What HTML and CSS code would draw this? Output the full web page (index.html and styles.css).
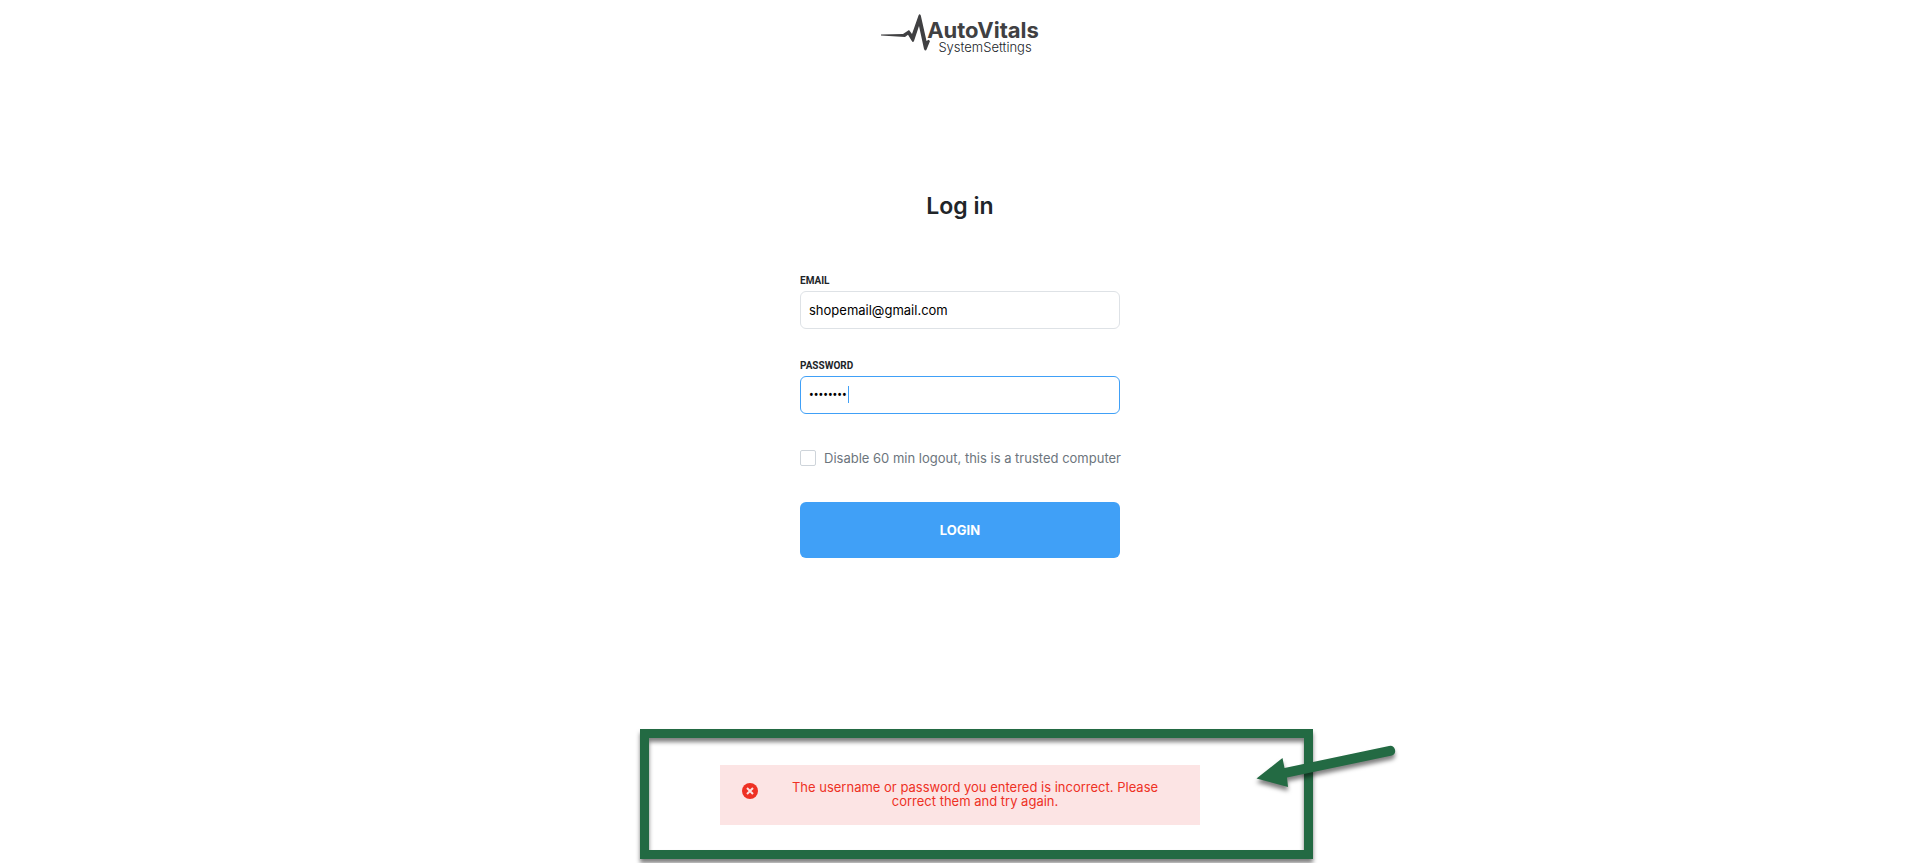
FILE: index.html
```html
<!DOCTYPE html>
<html lang="en">
<head>
<meta charset="utf-8">
<meta name="viewport" content="width=device-width, initial-scale=1">
<title>AutoVitals SystemSettings - Log in</title>
<link rel="stylesheet" href="styles.css">
</head>
<body>
<header class="brand">
  <svg class="brand-pulse" viewBox="0 0 49 40" width="49" height="40" aria-hidden="true">
    <path d="M0 21.600 L22 20.900 L28 17 L31 21 L37.500 2.500 Q38.500 0 39.800 2.500 L45.500 28 L47.500 26.800 L49 28 L45.800 36 Q44.500 39 43 36 L38 13 L33 28 Q32 30 30.800 28 L27 21.800 L24 24 L0 22.600 Z"/>
  </svg>
  <div class="brand-text">
    <span class="brand-name">AutoVitals</span>
    <span class="brand-product">SystemSettings</span>
  </div>
</header>
<main class="page">
  <form class="login">
    <h1 class="login-title">Log in</h1>
    <div class="field">
      <label class="field-label" for="email">EMAIL</label>
      <input class="field-input" id="email" type="email" value="shopemail@gmail.com">
    </div>
    <div class="field">
      <label class="field-label" for="password">PASSWORD</label>
      <div class="field-box">
        <input class="field-input field-input-active" id="password" type="password" value="password">
        <span class="caret"></span>
      </div>
    </div>
    <label class="trusted" for="trusted">
      <input class="trusted-box" id="trusted" type="checkbox">
      <span>Disable 60 min logout, this is a trusted computer</span>
    </label>
    <button class="login-button" type="submit">LOGIN</button>
  </form>
  <div class="alert" role="alert">
    <svg class="alert-icon" viewBox="0 0 16 16" width="16" height="16" aria-hidden="true">
      <circle cx="8" cy="8" r="8" fill="#ee3124"/>
      <path d="M5 5 L11 11 M11 5 L5 11" stroke="#fce4e4" stroke-width="2"/>
    </svg>
    <p class="alert-text">The username or password you entered is incorrect. Please correct them and try again.</p>
    <div class="callout-frame"></div>
    <svg class="callout-arrow" viewBox="0 0 150 60" width="150" height="60" aria-hidden="true">
      <path d="M6.500 38.500 L32.500 18 L34.500 28 L139 6 A5 5 0 0 1 142 15.500 L37 37.500 L38 47 Z"/>
    </svg>
  </div>
</main>
</body>
</html>
```
FILE: styles.css
```css
* {
  box-sizing: border-box;
}

body {
  margin: 0;
  min-height: 100vh;
  display: flex;
  flex-direction: column;
  background: #fff;
  color: #212529;
  font-family: Inter, "Liberation Sans", sans-serif;
  font-size: 13px;
}

.brand {
  display: flex;
  justify-content: center;
  padding-top: 13px;
}

.brand-pulse {
  margin-right: -3px;
  fill: #404042;
}

.brand-text {
  display: flex;
  flex-direction: column;
  align-items: center;
  padding-top: 5px;
}

.brand-name {
  font-size: 22px;
  line-height: 24px;
  font-weight: 700;
  color: #404042;
}

.brand-product {
  padding-left: 4px;
  font-size: 13px;
  line-height: 11px;
  font-weight: 300;
}

.page {
  flex: 1;
  display: flex;
  flex-direction: column;
  align-items: center;
  justify-content: space-between;
  padding: 139px 0 38px;
}

.login {
  display: flex;
  flex-direction: column;
  width: 320px;
}

.login-title {
  margin: 0 0 55px;
  font-size: 23px;
  line-height: 28px;
  font-weight: 600;
  text-align: center;
}

.field {
  display: flex;
  flex-direction: column;
  gap: 4px;
  margin-bottom: 31px;
}

.field-label {
  font-family: Roboto, "Liberation Sans", sans-serif;
  font-size: 10px;
  line-height: 12px;
  font-weight: 700;
}

.field-box {
  position: relative;
}

.field-input {
  display: block;
  width: 100%;
  height: 38px;
  padding: 0 8px;
  border: 1px solid #dee2e6;
  border-radius: 6px;
  outline: none;
  background: #fff;
  color: #000;
  font: inherit;
}

.field-input-active {
  border-color: #40a0f7;
  font-family: Roboto, "Liberation Sans", sans-serif;
  font-size: 14px;
}

.caret {
  position: absolute;
  left: 48px;
  top: 10px;
  width: 1px;
  height: 17px;
  background: #40a0f7;
}

.trusted {
  display: flex;
  align-items: center;
  gap: 8px;
  margin: 3px 0 34px;
  line-height: 20px;
  color: #6c757d;
  white-space: nowrap;
}

.trusted-box {
  appearance: none;
  flex: none;
  width: 16px;
  height: 16px;
  margin: 0;
  border: 1px solid #ced4da;
  border-radius: 2px;
  background: #fff;
}

.login-button {
  height: 56px;
  border: 0;
  border-radius: 6px;
  background: #40a0f7;
  color: #fff;
  font: inherit;
  font-weight: 700;
}

.alert {
  position: relative;
  display: flex;
  align-items: flex-start;
  width: 480px;
  padding: 15px 30px 17px 22px;
  background: #fce4e4;
  color: #ee3124;
}

.alert-icon {
  flex: none;
  margin-top: 3px;
}

.alert-text {
  flex: 1;
  margin: 0 0 0 22px;
  line-height: 14px;
  text-align: center;
}

.callout-frame {
  position: absolute;
  inset: -36px -113px -34px -80px;
  border: 9px solid #236a43;
  filter: drop-shadow(0 4px 2px rgba(0, 0, 0, 0.5));
}

.callout-arrow {
  position: absolute;
  left: 530px;
  top: -25px;
  fill: #236a43;
  filter: drop-shadow(0 4px 2px rgba(0, 0, 0, 0.5));
}
```
